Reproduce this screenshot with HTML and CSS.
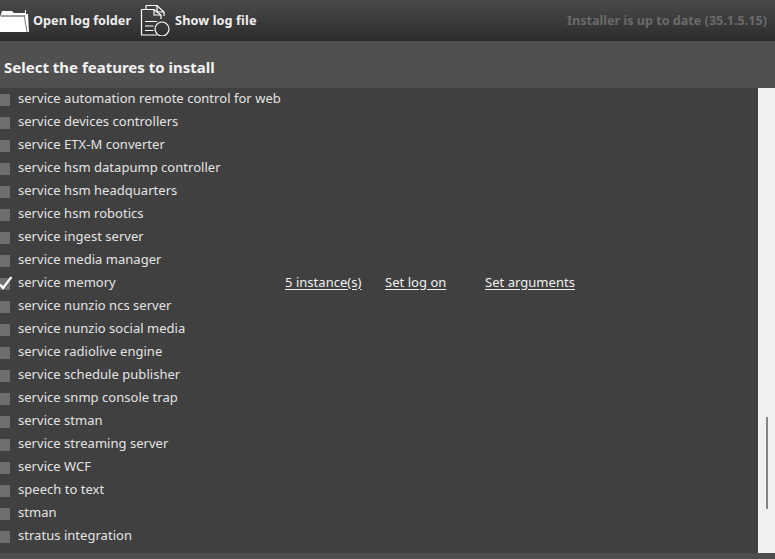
FILE: index.html
```html
<!DOCTYPE html>
<html lang="en">
<head>
<meta charset="utf-8">
<title>Installer</title>
<link rel="stylesheet" href="styles.css">
</head>
<body>
<header class="toolbar">
  <button class="tool tool-folder">
    <svg class="icon-folder" width="30" height="26" viewBox="0 0 30 26"><path d="M0 9 L2 3 L12 3 L14 5 L25 5 L25 2 L26 2 L26 6 L28 6 L29 24 L0 24 Z" fill="#fff"/><path d="M1 8 L25 8" stroke="#3a3a3a" stroke-width="1"/><path d="M24 7 L27 24" stroke="#777" stroke-width="1"/></svg>
    <span class="tool-label">Open log folder</span>
  </button>
  <button class="tool tool-file">
    <svg class="icon-file" width="32" height="32" viewBox="0 0 32 32" fill="none" stroke="#fff" stroke-width="1.2"><path d="M6 1.5 H17 L24 8 V12"/><path d="M17 1.5 V8 H24" /><path d="M6 1.5 V5"/><path d="M1.5 5.5 H14 L21 11 V15"/><path d="M1.5 5.5 V31 H17"/><path d="M14 5.5 V11 H21"/><path d="M5 17.5 H17 M5 22 H13.5 M5 26.5 H13.5"/><circle cx="22" cy="25" r="7"/></svg>
    <span class="tool-label label-file">Show log file</span>
  </button>
  <span class="status">Installer is up to date (35.1.5.15)</span>
</header>
<h1 class="title">Select the features to install</h1>
<main class="panel">
  <ul class="features">
    <li class="row"><i class="box"></i><span class="name">service automation remote control for web</span></li>
    <li class="row"><i class="box"></i><span class="name">service devices controllers</span></li>
    <li class="row"><i class="box"></i><span class="name">service ETX-M converter</span></li>
    <li class="row"><i class="box"></i><span class="name">service hsm datapump controller</span></li>
    <li class="row"><i class="box"></i><span class="name">service hsm headquarters</span></li>
    <li class="row"><i class="box"></i><span class="name">service hsm robotics</span></li>
    <li class="row"><i class="box"></i><span class="name">service ingest server</span></li>
    <li class="row"><i class="box"></i><span class="name">service media manager</span></li>
    <li class="row"><i class="box"><svg class="check" width="13" height="14" viewBox="0 0 13 14"><path d="M0 8.5 L3 12 L11.5 1" fill="none" stroke="#fff" stroke-width="2.2"/></svg></i><span class="name name-wide">service memory</span><a class="link link-a" href="#">5 instance(s)</a><a class="link link-b" href="#">Set log on</a><a class="link" href="#">Set arguments</a></li>
    <li class="row"><i class="box"></i><span class="name">service nunzio ncs server</span></li>
    <li class="row"><i class="box"></i><span class="name">service nunzio social media</span></li>
    <li class="row"><i class="box"></i><span class="name">service radiolive engine</span></li>
    <li class="row"><i class="box"></i><span class="name">service schedule publisher</span></li>
    <li class="row"><i class="box"></i><span class="name">service snmp console trap</span></li>
    <li class="row"><i class="box"></i><span class="name">service stman</span></li>
    <li class="row"><i class="box"></i><span class="name">service streaming server</span></li>
    <li class="row"><i class="box"></i><span class="name">service WCF</span></li>
    <li class="row"><i class="box"></i><span class="name">speech to text</span></li>
    <li class="row"><i class="box"></i><span class="name">stman</span></li>
    <li class="row"><i class="box"></i><span class="name">stratus integration</span></li>
  </ul>
  <div class="scrollbar"><div class="thumb"></div></div>
</main>
<footer class="foot"></footer>
</body>
</html>
```
FILE: styles.css
```css
* { box-sizing: border-box; }
html, body { margin: 0; height: 100%; }
body {
  width: 775px;
  height: 559px;
  overflow: hidden;
  display: flex;
  flex-direction: column;
  background: #505050;
  font-family: "Noto Sans", "Open Sans", sans-serif;
  color: #f0f0f0;
}
.toolbar {
  height: 41px;
  flex: none;
  display: flex;
  align-items: center;
  background: linear-gradient(#4a4a4a, #2c2c2c);
}
.tool {
  display: flex;
  align-items: center;
  padding: 0;
  border: 0;
  background: none;
  color: #eee;
  font: 700 12.7px "Noto Sans", sans-serif;
}
.tool-label { margin-bottom: 2px; }
.label-file { letter-spacing: 0.1px; }
.tool-folder { gap: 3px; margin-left: 0; }
.tool-file { gap: 3px; margin-left: 10px; }
.icon-file { margin-bottom: 1px; margin-left: -1px; }
.status {
  margin-left: auto;
  margin-right: 8px;
  font-size: 12.6px;
  font-weight: 700;
  color: #6a6a6a;
}
.title {
  height: 47px;
  flex: none;
  margin: 0;
  padding: 15px 0 0 4px;
  font-size: 15px;
  line-height: 22px;
  font-weight: 700;
  color: #f2f2f2;
  background: #505050;
}
.panel {
  height: 465px;
  flex: none;
  display: flex;
  background: #404040;
}
.features {
  flex: 1;
  list-style: none;
  margin: -2px 0 0;
  padding: 0;
}
.row {
  height: 23px;
  display: flex;
  align-items: center;
  font-size: 13px;
  letter-spacing: 0.03px;
  color: #e4e4e4;
}
.box {
  position: relative;
  width: 10px;
  height: 12px;
  margin-right: 8px;
  margin-top: 4px;
  background: #6e6e6e;
}
.check { position: absolute; left: 0; top: -2px; }
.name-wide { width: 267px; }
.link { color: #f0f0f0; text-decoration: underline; text-underline-offset: 2px; }
.link-a { width: 100px; }
.link-b { width: 100px; }
.scrollbar {
  width: 17px;
  flex: none;
  position: relative;
  background: #f0f0f0;
}
.thumb {
  position: absolute;
  left: 8px;
  top: 329px;
  width: 2px;
  height: 92px;
  background: #858585;
}
.foot {
  flex: 1;
  background: #4e4e4e;
}
```
